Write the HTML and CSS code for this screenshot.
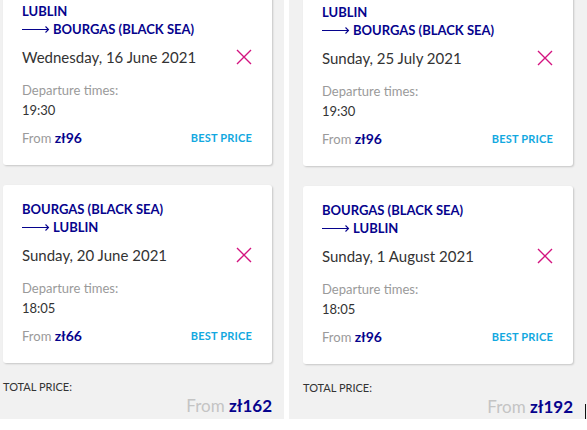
FILE: index.html
```html
<!DOCTYPE html>
<html>
<head>
<meta charset="utf-8">
<link rel="stylesheet" href="styles.css">
</head>
<body>
<div class="page">
  <div class="col col-left">
    <div class="card">
      <div class="route">LUBLIN</div>
      <div class="route"><svg class="arrow" width="28" height="8" viewBox="0 0 28 8"><path d="M0 4.5H26.5M23.5 1.5L26.5 4.5L23.5 7.5" fill="none" stroke="#06038d" stroke-width="1.1"/></svg>BOURGAS (BLACK SEA)</div>
      <div class="date-row"><span class="date">Wednesday, 16 June 2021</span><svg class="close" width="16" height="16" viewBox="0 0 16 16"><path d="M1 1L15 15M15 1L1 15" stroke="#d3137f" stroke-width="1.4"/></svg></div>
      <div class="label">Departure times:</div>
      <div class="time">19:30</div>
      <div class="foot"><span class="from">From <b>zł96</b></span><span class="best">BEST PRICE</span></div>
    </div>
    <div class="card">
      <div class="route">BOURGAS (BLACK SEA)</div>
      <div class="route"><svg class="arrow" width="28" height="8" viewBox="0 0 28 8"><path d="M0 4.5H26.5M23.5 1.5L26.5 4.5L23.5 7.5" fill="none" stroke="#06038d" stroke-width="1.1"/></svg>LUBLIN</div>
      <div class="date-row"><span class="date">Sunday, 20 June 2021</span><svg class="close" width="16" height="16" viewBox="0 0 16 16"><path d="M1 1L15 15M15 1L1 15" stroke="#d3137f" stroke-width="1.4"/></svg></div>
      <div class="label">Departure times:</div>
      <div class="time">18:05</div>
      <div class="foot"><span class="from">From <b>zł66</b></span><span class="best">BEST PRICE</span></div>
    </div>
    <div class="total-label">TOTAL PRICE:</div>
    <div class="total-price">From <b>zł162</b></div>
  </div>
  <div class="col col-right">
    <div class="card">
      <div class="route">LUBLIN</div>
      <div class="route"><svg class="arrow" width="28" height="8" viewBox="0 0 28 8"><path d="M0 4.5H26.5M23.5 1.5L26.5 4.5L23.5 7.5" fill="none" stroke="#06038d" stroke-width="1.1"/></svg>BOURGAS (BLACK SEA)</div>
      <div class="date-row"><span class="date">Sunday, 25 July 2021</span><svg class="close" width="16" height="16" viewBox="0 0 16 16"><path d="M1 1L15 15M15 1L1 15" stroke="#d3137f" stroke-width="1.4"/></svg></div>
      <div class="label">Departure times:</div>
      <div class="time">19:30</div>
      <div class="foot"><span class="from">From <b>zł96</b></span><span class="best">BEST PRICE</span></div>
    </div>
    <div class="card">
      <div class="route">BOURGAS (BLACK SEA)</div>
      <div class="route"><svg class="arrow" width="28" height="8" viewBox="0 0 28 8"><path d="M0 4.5H26.5M23.5 1.5L26.5 4.5L23.5 7.5" fill="none" stroke="#06038d" stroke-width="1.1"/></svg>LUBLIN</div>
      <div class="date-row"><span class="date">Sunday, 1 August 2021</span><svg class="close" width="16" height="16" viewBox="0 0 16 16"><path d="M1 1L15 15M15 1L1 15" stroke="#d3137f" stroke-width="1.4"/></svg></div>
      <div class="label">Departure times:</div>
      <div class="time">18:05</div>
      <div class="foot"><span class="from">From <b>zł96</b></span><span class="best">BEST PRICE</span></div>
    </div>
    <div class="total-label">TOTAL PRICE:</div>
    <div class="total-price">From <b>zł192</b></div>
    <span class="cursor"></span>
  </div>
</div>
</body>
</html>
```

FILE: styles.css
```css
html, body {
  margin: 0;
  padding: 0;
  background: #fff;
}
body {
  font-family: Lato, "Open Sans", sans-serif;
  color: #333;
  overflow: hidden;
}
.page {
  display: flex;
  gap: 5px;
  margin-top: -13px;
}
.col {
  background: #f1f1f1;
  display: flex;
  flex-direction: column;
  height: 432px;
  box-sizing: border-box;
}
.col-left {
  width: 284px;
  padding: 0 12px 0 3px;
}
.col-right {
  flex: 1;
  padding: 1px 14px 0 14px;
  position: relative;
}
.card {
  background: #fff;
  border-radius: 3px;
  box-shadow: 1px 1px 2px rgba(0,0,0,0.18);
  padding: 15px 20px 15px 19px;
  margin-bottom: 20px;
  height: 178px;
  box-sizing: border-box;
}
.route {
  color: #06038d;
  font-weight: 700;
  font-size: 13px;
  line-height: 18px;
  display: flex;
  align-items: center;
}
.arrow {
  margin-right: 3px;
}
.date-row {
  display: flex;
  justify-content: space-between;
  align-items: center;
  margin-top: 7px;
  height: 24px;
}
.date {
  font-size: 15px;
  color: #333;
}
.close {
  margin-top: -1px;
}
.label {
  margin-top: 11px;
  font-size: 13px;
  line-height: 20px;
  color: #9a9a9a;
}
.time {
  font-size: 13px;
  line-height: 20px;
  color: #333;
}
.foot {
  margin-top: 8px;
  display: flex;
  justify-content: space-between;
  align-items: center;
  line-height: 20px;
}
.from {
  font-size: 13px;
  color: #9a9a9a;
}
.from b {
  color: #06038d;
  font-size: 14px;
}
.best {
  color: #12a8e0;
  font-weight: 700;
  font-size: 11px;
  letter-spacing: 0.2px;
}
.total-label {
  font-size: 11px;
  line-height: 16px;
  color: #333;
  margin-top: -4px;
}
.total-price {
  text-align: right;
  font-size: 17px;
  line-height: 22px;
  color: #c4c4c4;
}
.total-price b {
  color: #06038d;
}
.cursor {
  position: absolute;
  right: 1px;
  top: 417px;
  width: 1px;
  height: 15px;
  background: #111;
}
```
